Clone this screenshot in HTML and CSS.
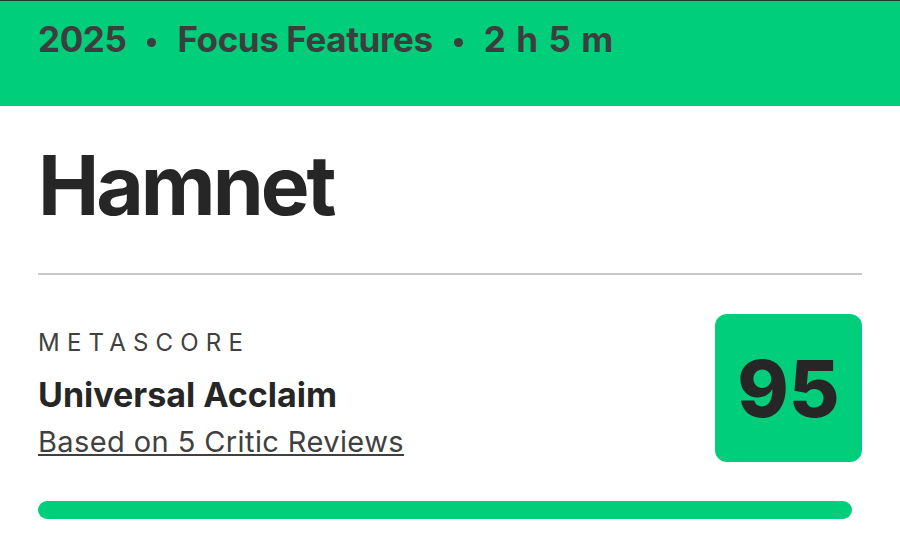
FILE: index.html
```html
<!DOCTYPE html>
<html lang="en">
<head>
    <meta charset="UTF-8">
    <meta name="viewport" content="width=device-width, initial-scale=1.0">
    <title>Hamnet</title>
    <link rel="stylesheet" href="styles.css">
</head>
<body>
    <header class="meta-bar">
        <span>2025</span>
        <span class="dot"></span>
        <span>Focus Features</span>
        <span class="dot"></span>
        <span class="runtime">2 h 5 m</span>
    </header>
    <main class="content">
        <h1 class="title">Hamnet</h1>
        <hr class="divider">
        <section class="score-row">
            <div class="score-info">
                <div class="label">METASCORE</div>
                <div class="verdict">Universal Acclaim</div>
                <a class="reviews" href="#">Based on 5 Critic Reviews</a>
            </div>
            <div class="score-box">95</div>
        </section>
        <div class="bar">
            <div class="bar-fill" style="width: 98.8%"></div>
        </div>
    </main>
</body>
</html>
```

FILE: styles.css
```css
body {
    margin: 0;
    font-family: Inter, "Noto Sans", sans-serif;
    color: #262626;
    background: #fff;
}

.meta-bar {
    background-color: #00ce7a;
    border-top: 1px solid #1b3b2c;
    height: 106px;
    box-sizing: border-box;
    padding: 17px 38px 0;
    display: flex;
    align-items: flex-start;
    gap: 21px;
    font-size: 35px;
    line-height: 42px;
    font-weight: 700;
    letter-spacing: -0.4px;
    color: #3d3d3d;
}

.meta-bar .runtime {
    word-spacing: 3px;
}

.meta-bar .dot {
    width: 9px;
    height: 9px;
    margin-top: 20px;
    border-radius: 50%;
    background-color: #3d3d3d;
}

.content {
    padding: 0 38px;
}

.title {
    margin: 30px 0 0;
    font-size: 82px;
    font-weight: 700;
    line-height: 100px;
    letter-spacing: -3px;
}

.divider {
    border: 0;
    border-top: 2px solid #c8c8c8;
    margin: 37px 0 0;
}

.score-row {
    display: flex;
    justify-content: space-between;
    margin-top: 39px;
}

.label {
    margin-top: 14px;
    font-size: 24px;
    line-height: 30px;
    letter-spacing: 7.2px;
    color: #404040;
}

.verdict {
    margin-top: 15px;
    font-size: 34px;
    line-height: 44px;
    font-weight: 700;
}

.reviews {
    display: inline-block;
    margin-top: 7px;
    font-size: 29px;
    line-height: 36px;
    letter-spacing: 0.4px;
    color: #404040;
}

.score-box {
    width: 147px;
    height: 148px;
    border-radius: 12px;
    background-color: #00ce7a;
    display: flex;
    align-items: center;
    justify-content: center;
    font-size: 78px;
    font-weight: 800;
}

.bar {
    margin-top: 39px;
}

.bar-fill {
    height: 18px;
    border-radius: 9px;
    background-color: #00ce7a;
}
```
